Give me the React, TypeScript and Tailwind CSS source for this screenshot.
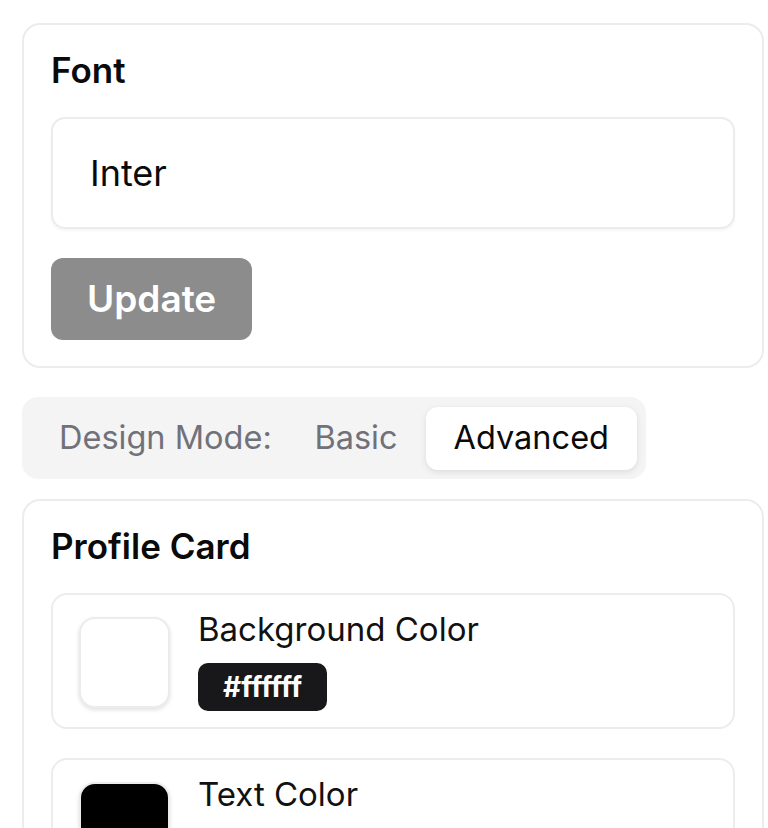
const font = { fontFamily: "Inter, 'Noto Sans', sans-serif" };

const ColorRow = ({ label, value }: { label: string; value: string }) => (
  <div className="flex items-start gap-[28px] rounded-[16px] border-2 border-[#ececee] pl-[26px] pr-6 pt-[22px] pb-[16px]">
    <div
      className="h-[91px] w-[91px] shrink-0 rounded-[16px] border-2 border-[#ececee] shadow-[0_2px_4px_rgba(0,0,0,0.12)]"
      style={{ backgroundColor: value }}
    />
    <div className="-mt-[8px] flex flex-col items-start">
      <span className="whitespace-nowrap text-[33px] leading-[40px] text-[#111]">{label}</span>
      <span className="mt-[14px] rounded-[10px] bg-[#18181b] px-[25px] text-[28px] font-bold leading-[48px] text-white">
        {value}
      </span>
    </div>
  </div>
);

export default function App() {
  return (
    <div className="min-h-[828px] bg-white pl-[22px] pr-[4px] pt-[23px]" style={font}>
      <section className="rounded-[18px] border-2 border-[#ececee] px-[27px] pt-[23px] pb-[26px]">
        <h2 className="text-[35px] font-semibold leading-[44px] text-[#0a0a0a]">Font</h2>
        <div className="mt-[25px] flex h-[112px] items-center rounded-[14px] border-2 border-[#ececee] pl-[37px] text-[36px] text-[#0a0a0a] shadow-[0_2px_3px_rgba(0,0,0,0.04)]">
          Inter
        </div>
        <button className="mt-[29px] h-[82px] rounded-[12px] bg-[#8c8c8c] px-[36px] text-[37px] font-semibold text-white">
          Update
        </button>
      </section>

      <div className="mt-[29px] flex w-[624px] items-center whitespace-nowrap rounded-[16px] bg-[#f4f4f5] pl-[37px] pr-[9px] pt-[10px] pb-[9px]">
        <span className="text-[32.5px] text-[#71717a]">Design Mode:</span>
        <span className="ml-auto px-[28px] text-[32.5px] text-[#71717a]">Basic</span>
        <span className="flex h-[63px] items-center rounded-[12px] bg-white px-[28px] text-[32.5px] text-[#0a0a0a] shadow-[0_2px_6px_rgba(0,0,0,0.1)]">
          Advanced
        </span>
      </div>

      <section className="mt-[20px] rounded-[18px] border-2 border-[#ececee] px-[27px] pt-[23px] pb-[26px]">
        <h2 className="text-[35px] font-semibold leading-[44px] text-[#0a0a0a]">Profile Card</h2>
        <div className="mt-[25px] flex flex-col gap-[29px]">
          <ColorRow label="Background Color" value="#ffffff" />
          <ColorRow label="Text Color" value="#000000" />
        </div>
      </section>
    </div>
  );
}
